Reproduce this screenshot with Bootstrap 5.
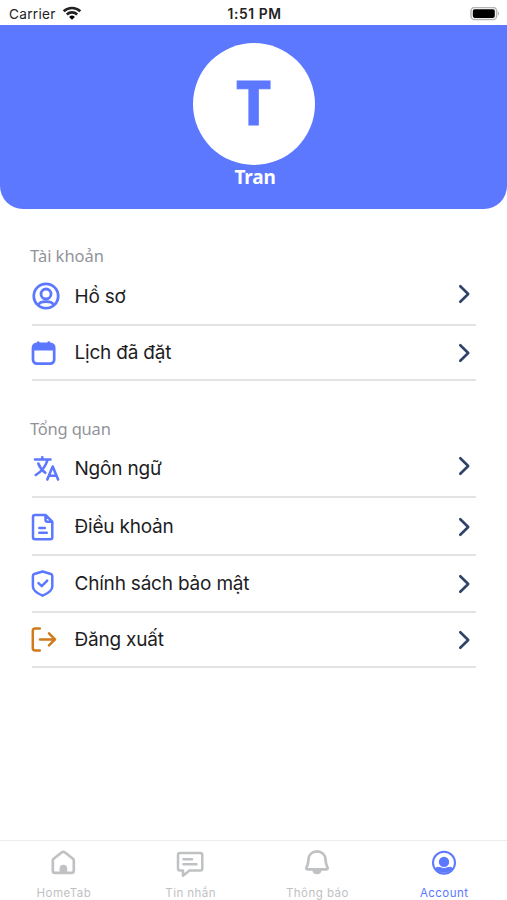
<!DOCTYPE html>
<html lang="vi">
<head>
<meta charset="utf-8">
<meta name="viewport" content="width=device-width, initial-scale=1">
<title>Account</title>
<link rel="stylesheet" href="https://cdn.jsdelivr.net/npm/bootstrap@5.3.0/dist/css/bootstrap.min.css">
<style>
  :root { --brand: #5c78ff; --navy: #2f4368; --muted-tab: #c0c1c3; }
  body { font-family: Inter, "Liberation Sans", sans-serif; color: #1d1d1f; background: #fff; }
  svg { display: block; flex: none; fill: none; stroke: currentColor; stroke-linecap: round; stroke-linejoin: round; }
  .screen { height: 900px; overflow: hidden; }
  .status { height: 25px; padding: 3px 7px 0 9px; font-size: 13.6px; letter-spacing: .3px; line-height: 22px; color: #222; }
  .status > * { flex: 1 1 0; }
  .status .carrier { gap: 6px; }
  .wifi { stroke-linecap: butt; }
  .clock { font-weight: 600; font-size: 13.8px; letter-spacing: .6px; }
  .hero { height: 184px; padding-top: 18px; background: var(--brand); border-radius: 0 0 23px 23px; font-family: "Noto Sans", sans-serif; }
  .avatar { width: 122px; height: 122px; font-size: 61px; line-height: 1; color: var(--brand); padding-bottom: 6px; -webkit-text-stroke: 1px var(--brand); }
  .person { font-size: 19px; line-height: 25px; letter-spacing: -.2px; padding-left: 3px; }
  .menu { padding: 0 31px 0 28px; }
  .group-title { height: 24px; margin: 35px 0 0 2px; font: 400 16.5px/23px "Noto Sans", sans-serif; letter-spacing: -.05px; color: #919399; }
  .group-title.second { margin-top: 36px; letter-spacing: -.2px; }
  .entry { height: 57px; position: relative; font-size: 19px; letter-spacing: -.2px; padding: 0 5px 1px 0; color: inherit; }
  .entry::after { content: ""; position: absolute; left: 4px; right: 0; bottom: 0; height: 2px; background: #e3e3e5; }
  .entry.tall { height: 58px; }
  .entry.short { height: 55px; }
  .entry span { margin: 1px 0 0 14.5px; }
  .glyph { color: var(--brand); }
  .exit { color: #d07a1c; }
  .chev { color: var(--navy); }
  .raised { margin-bottom: 6px; }
  .tabs { height: 60px; border-top: 1px solid #ececee; padding-top: 8px; font-size: 11.5px; letter-spacing: .45px; }
  .tabs a { color: var(--muted-tab); flex: 1 1 0; }
  .tabs a.current { color: var(--brand); }
  .tabs span { line-height: 16px; margin-top: 8px; padding-left: 1px; }
</style>
</head>
<body>
<div class="screen d-flex flex-column">
  <header class="status d-flex align-items-center">
    <div class="carrier d-flex align-items-center">
      <span>Carrier</span>
      <svg class="wifi" width="20" height="16" viewBox="0 0 20 16" stroke-width="2.6" stroke="#000"><path d="M1.700 5.300a12 12 0 0 1 16.600 0M4.800 8.500a7.500 7.500 0 0 1 10.400 0"/><path d="M10 13.700 7.100 10.900a4.100 4.100 0 0 1 5.800 0z" fill="#000" stroke="none"/></svg>
    </div>
    <div class="clock text-center">1:51 PM</div>
    <div class="d-flex justify-content-end">
      <svg width="30" height="14" viewBox="0 0 30 14"><rect x="1" y=".4" width="25.600" height="12.200" rx="3.600" stroke="#b5b5b5" stroke-width="1.500"/><rect x="2.800" y="2.200" width="22" height="8.700" rx="1.800" fill="#000" stroke="none"/><path d="M28 4.300q2.400 2.200 0 4.400z" fill="#b5b5b5" stroke="none"/></svg>
    </div>
  </header>

  <section class="hero d-flex flex-column align-items-center text-white fw-bold">
    <div class="avatar rounded-circle bg-white d-flex align-items-center justify-content-center">T</div>
    <div class="person">Tran</div>
  </section>

  <main class="menu flex-grow-1">
    <h2 class="group-title">Tài khoản</h2>
    <a class="entry tall d-flex align-items-center text-decoration-none" href="#">
      <svg class="glyph" width="32" height="32" viewBox="0 0 32 32" stroke-width="2.800"><circle cx="18" cy="15" r="12.200"/><circle cx="18" cy="13" r="5"/><path d="M10.500 24C11.300 21.400 13.500 20.600 18 20.600s6.700.8 7.500 3.400"/></svg>
      <span>Hồ sơ</span>
      <svg class="chev ms-auto raised" width="14" height="22" viewBox="0 0 14 22" stroke-width="2.600"><path d="M3.300 3.200l7.900 7.800-7.900 7.800"/></svg>
    </a>
    <a class="entry short d-flex align-items-center text-decoration-none" href="#">
      <svg class="glyph" width="32" height="32" viewBox="0 0 32 32" stroke-width="2.700"><rect x="5" y="6.800" width="21.200" height="19.800" rx="3.800"/><path d="M5 12.800V10.500Q5 7 8.500 7h14.200q3.500 0 3.500 3.500v2.300z" fill="currentColor" stroke-width="1.500"/><path d="M10.200 5.500v2M20.800 5.500v2"/></svg>
      <span>Lịch đã đặt</span>
      <svg class="chev ms-auto" width="14" height="22" viewBox="0 0 14 22" stroke-width="2.600"><path d="M3.300 3.200l7.900 7.800-7.900 7.800"/></svg>
    </a>

    <h2 class="group-title second">Tổng quan</h2>
    <a class="entry d-flex align-items-center text-decoration-none" href="#">
      <svg class="glyph" width="32" height="32" viewBox="0 0 32 32" stroke-width="2.600"><path d="M7 6.500h15.500M14.300 4.300v2.200M19.500 7c-1.700 6-6 11.500-11.700 15M10.300 10.500c1.500 4 4 7 7 9.300"/><path d="M19.300 26.500l5.400-13 5.400 13M20.800 22.700h7.800"/></svg>
      <span>Ngôn ngữ</span>
      <svg class="chev ms-auto raised" width="14" height="22" viewBox="0 0 14 22" stroke-width="2.600"><path d="M3.300 3.200l7.900 7.800-7.900 7.800"/></svg>
    </a>
    <a class="entry tall d-flex align-items-center text-decoration-none" href="#">
      <svg class="glyph" width="32" height="32" viewBox="0 0 32 32" stroke-width="2.500"><path d="M17.500 4H7Q5 4 5 6v20.200q0 2 2 2h15.300q2 0 2-2V10.700zM17.500 4v4.700q0 2 2 2h4.800M11.300 17h5.500M11.300 21.700h7.500"/></svg>
      <span>Điều khoản</span>
      <svg class="chev ms-auto" width="14" height="22" viewBox="0 0 14 22" stroke-width="2.600"><path d="M3.300 3.200l7.900 7.800-7.900 7.800"/></svg>
    </a>
    <a class="entry d-flex align-items-center text-decoration-none" href="#">
      <svg class="glyph" width="32" height="32" viewBox="0 0 32 32" stroke-width="2.500"><path d="M14.600 3.500 23 6q1.300.5 1.300 2v10.500c0 4.200-4.700 7-9.700 9.200-5-2.200-9.700-5-9.700-9.200V8q0-1.500 1.300-2zM10.500 15.200l3.200 3 5.500-5.500"/></svg>
      <span>Chính sách bảo mật</span>
      <svg class="chev ms-auto" width="14" height="22" viewBox="0 0 14 22" stroke-width="2.600"><path d="M3.300 3.200l7.900 7.800-7.900 7.800"/></svg>
    </a>
    <a class="entry short d-flex align-items-center text-decoration-none" href="#">
      <svg class="exit" width="32" height="32" viewBox="0 0 32 32" stroke-width="2.500"><path d="M11.800 4.500H7q-2.200 0-2.200 2.200v17.500q0 2.200 2.200 2.200h4.800M12 15.400h15M21 9.400l6 6-6 6"/></svg>
      <span>Đăng xuất</span>
      <svg class="chev ms-auto" width="14" height="22" viewBox="0 0 14 22" stroke-width="2.600"><path d="M3.300 3.200l7.900 7.800-7.900 7.800"/></svg>
    </a>
  </main>

  <nav class="tabs d-flex">
    <a class="d-flex flex-column align-items-center text-decoration-none" href="#">
      <svg width="32" height="28" viewBox="0 0 32 28" stroke-width="2.700"><path d="M5.800 11.500q0-1 .8-1.700l8-6.300q1.700-1.300 3.400 0l8 6.300q.8.700.8 1.700v10.300q0 2-2 2H7.800q-2 0-2-2z"/><path d="M12.600 24v-4.500a3.800 3.800 0 0 1 7.600 0V24z" fill="currentColor" stroke="none"/></svg>
      <span>HomeTab</span>
    </a>
    <a class="d-flex flex-column align-items-center text-decoration-none" href="#">
      <svg width="32" height="28" viewBox="0 0 32 28" stroke-width="2.500"><path d="M6 4h20.300q2 0 2 2v13.500q0 2-2 2H15.500L9 26.700v-5.200H6q-2 0-2-2V6q0-2 2-2zM9.500 10.300h8.500M9.500 15.200h13"/></svg>
      <span>Tin nhắn</span>
    </a>
    <a class="d-flex flex-column align-items-center text-decoration-none" href="#">
      <svg width="32" height="28" viewBox="0 0 32 28" stroke-width="2.700"><path d="M16 2.300c-5 0-8.200 3.500-8.500 8-.2 3.500-.6 5.700-2 8.200-.6 1.200 0 1.900 1 1.900h19c1 0 1.600-.7 1-1.900-1.400-2.500-1.800-4.700-2-8.200-.3-4.500-3.500-8-8.500-8z"/><path d="M11.200 21h9.600q-.6 4.200-4.800 4.200T11.200 21z" fill="currentColor" stroke="none"/></svg>
      <span>Thông báo</span>
    </a>
    <a class="current d-flex flex-column align-items-center text-decoration-none" href="#">
      <svg width="32" height="28" viewBox="0 0 32 28" stroke-width="2"><circle cx="16" cy="13.700" r="11"/><circle cx="16" cy="12.900" r="5.200" fill="currentColor" stroke="none"/><path d="M7.500 19.300q2-1.700 4.300-.7 4.200 2 8.400 0 2.300-1 4.300.7a11 11 0 0 1-17 0z" fill="currentColor" stroke="currentColor" stroke-width="1"/></svg>
      <span>Account</span>
    </a>
  </nav>
</div>
<script src="https://cdn.jsdelivr.net/npm/bootstrap@5.3.0/dist/js/bootstrap.bundle.min.js"></script>
</body>
</html>
